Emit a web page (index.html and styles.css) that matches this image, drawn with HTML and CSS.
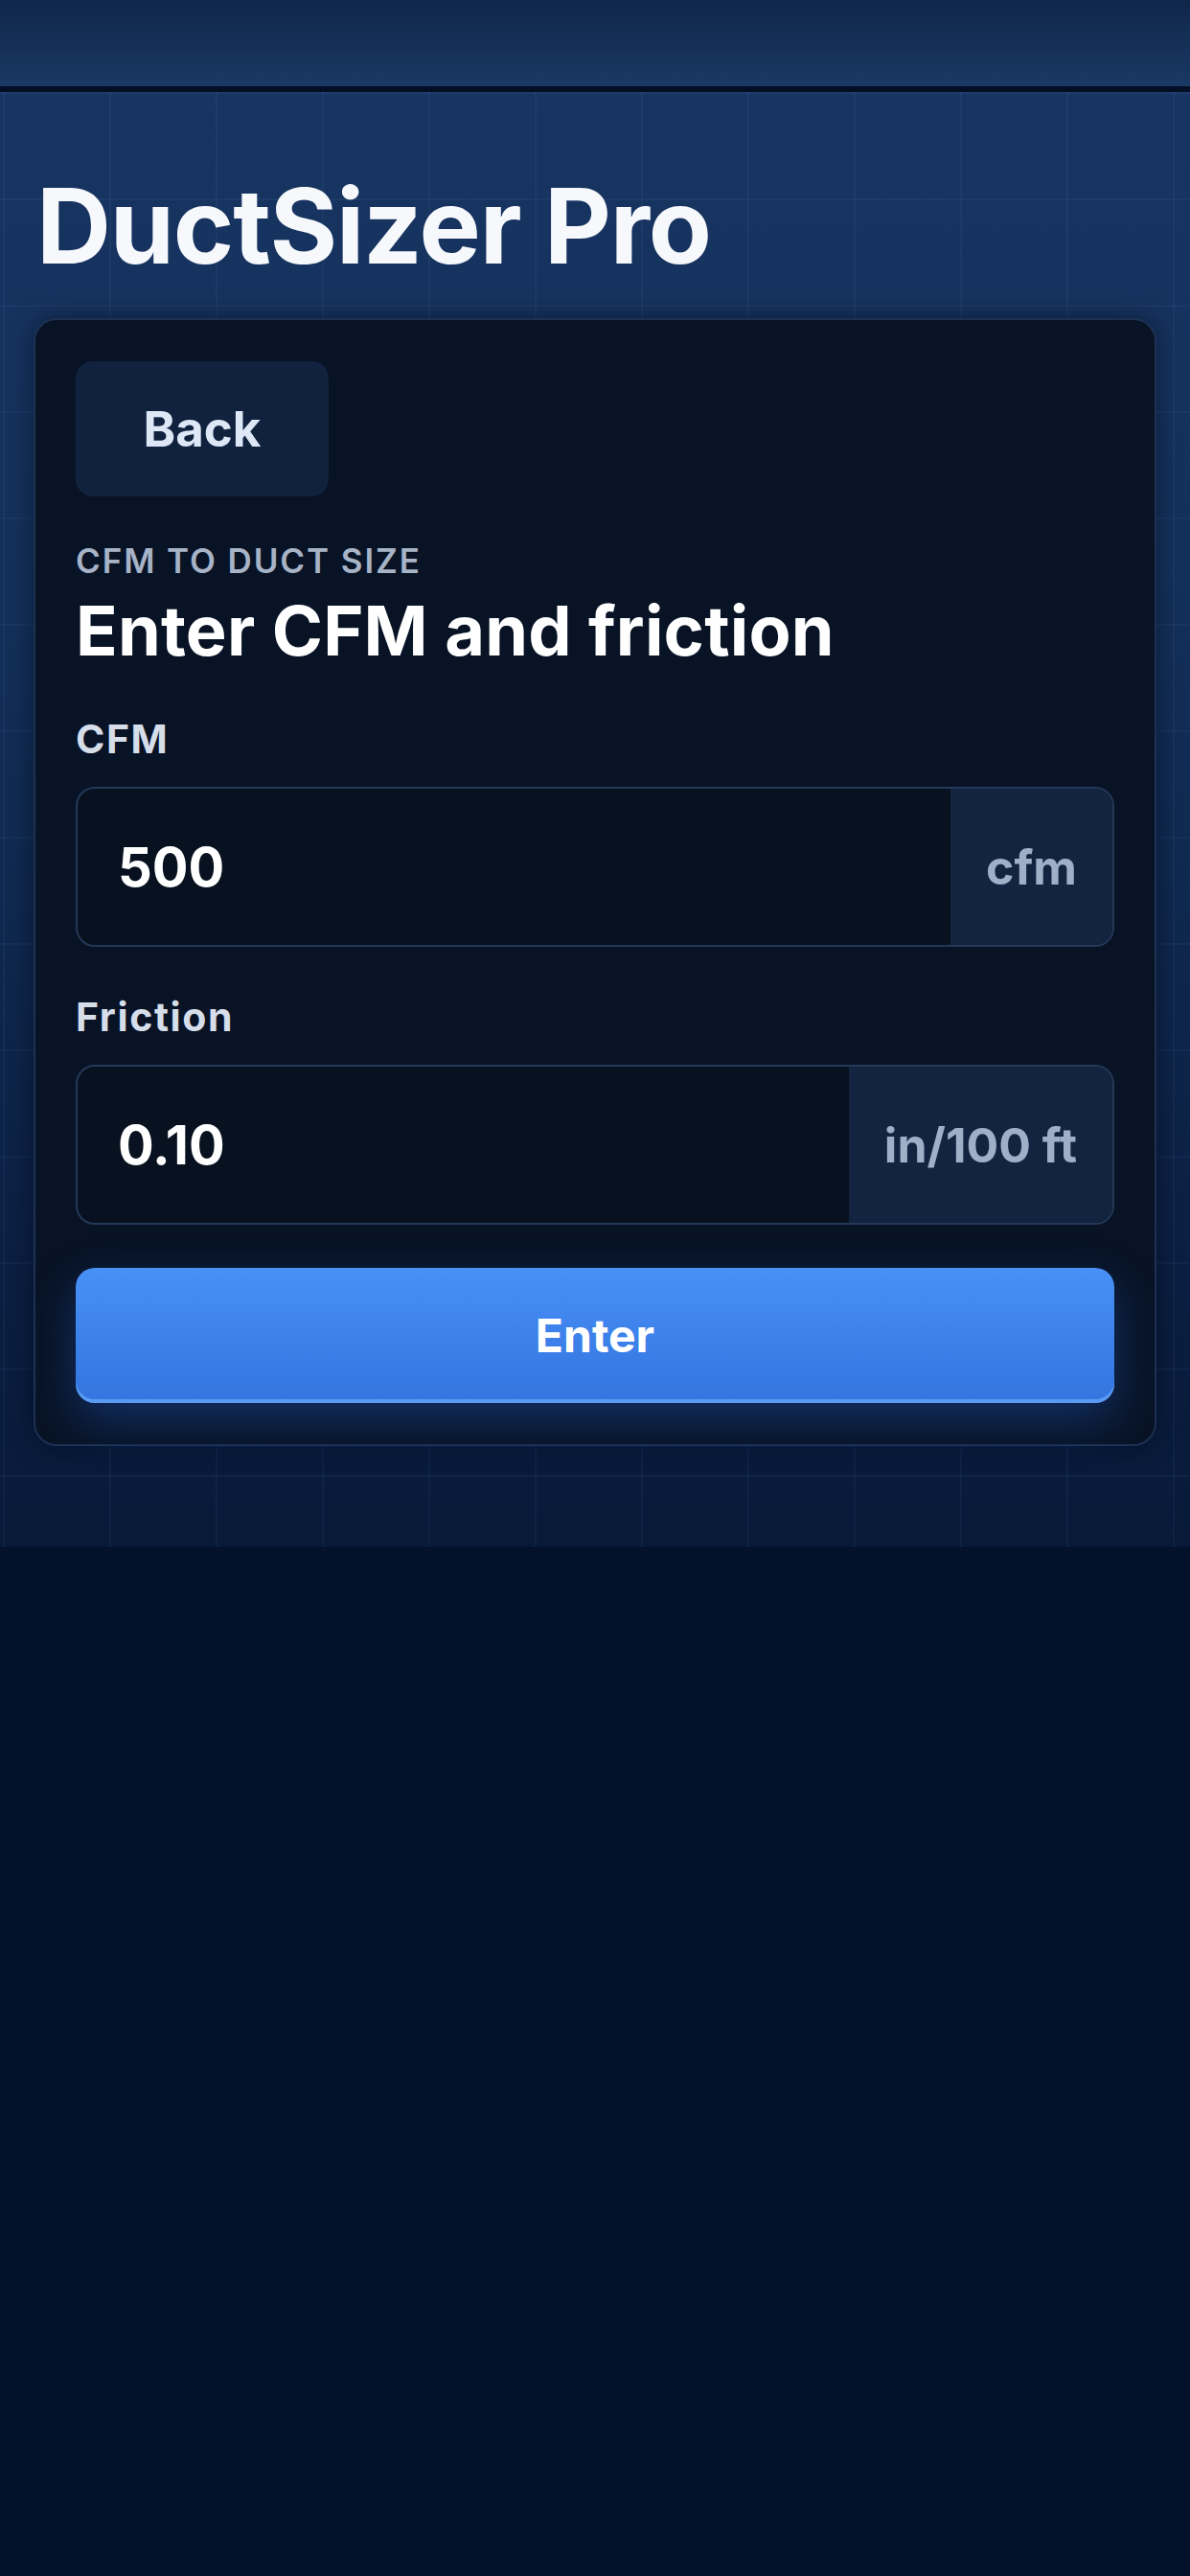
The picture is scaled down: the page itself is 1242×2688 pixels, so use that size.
FILE: index.html
```html
<!DOCTYPE html>
<html lang="en">
<head>
    <meta charset="UTF-8">
    <meta name="viewport" content="width=device-width, initial-scale=1.0">
    <title>DuctSizer Pro</title>
    <link rel="stylesheet" href="styles.css">
</head>
<body>
    <div class="topbar"></div>
    <div class="divider"></div>

    <main class="main">
        <h1 class="app-title">DuctSizer Pro</h1>

        <section class="card">
            <button type="button" class="back-btn">Back</button>

            <p class="eyebrow">CFM TO DUCT SIZE</p>
            <h2 class="heading">Enter CFM and friction</h2>

            <form class="duct-form">
                <label for="cfm" class="field-label">CFM</label>
                <div class="field">
                    <input type="text" id="cfm" class="field-input" value="500">
                    <span class="unit">cfm</span>
                </div>

                <label for="friction" class="field-label friction-label">Friction</label>
                <div class="field">
                    <input type="text" id="friction" class="field-input" value="0.10">
                    <span class="unit">in/100 ft</span>
                </div>

                <button type="button" class="enter-btn">Enter</button>
            </form>
        </section>
    </main>
</body>
</html>
```

FILE: styles.css
```css
body {
    margin: 0;
    padding: 0;
    font-family: Inter, "Noto Sans", "Liberation Sans", sans-serif;
    background-color: #03122a;
    color: #f4f7fc;
}
.topbar {
    height: 90px;
    background: linear-gradient(180deg, #10264a 0%, #1a3964 100%);
}
.divider {
    height: 6px;
    background-color: #040f25;
}
.main {
    padding: 75px 35px 105px;
    background:
        linear-gradient(90deg, rgba(120, 160, 220, 0.06) 2px, transparent 2px) 3px 0 / 111px 111px,
        linear-gradient(180deg, rgba(120, 160, 220, 0.06) 2px, transparent 2px) 0 0 / 111px 111px,
        linear-gradient(180deg, #183562 0%, #13305a 35%, #0b1f42 80%, #081a38 100%);
}
.app-title {
    margin: 0 0 31px 3px;
    font-size: 108px;
    line-height: 130px;
    font-weight: 700;
    letter-spacing: -1.2px;
    color: #f6f8fc;
}
.card {
    background-color: #081325;
    border: 2px solid #1e3153;
    border-radius: 24px;
    padding: 43px 42px 43px;
    box-shadow: 0 0 24px rgba(2, 8, 20, 0.5);
}
.back-btn {
    display: block;
    width: 264px;
    height: 141px;
    border: none;
    border-radius: 18px;
    background-color: #11223f;
    color: #dde7f6;
    font-family: inherit;
    font-size: 51px;
    font-weight: 700;
    padding: 0;
}
.eyebrow {
    margin: 46px 0 0;
    font-size: 35px;
    line-height: 42px;
    font-weight: 600;
    letter-spacing: 1.9px;
    color: #a7b3c7;
}
.heading {
    margin: 9px 0 0;
    font-size: 72px;
    line-height: 86px;
    font-weight: 700;
    letter-spacing: 0.2px;
    color: #ffffff;
}
.duct-form {
    display: flex;
    flex-direction: column;
}
.field-label {
    margin-top: 47px;
    font-size: 41px;
    line-height: 47px;
    font-weight: 700;
    letter-spacing: 1.6px;
    color: #d6deea;
}
.friction-label {
    margin-top: 50px;
}
.field {
    display: flex;
    height: 163px;
    margin-top: 26px;
    border: 2px solid #243858;
    border-radius: 20px;
    background-color: #07111f;
    overflow: hidden;
}
.field-input {
    flex: 1;
    min-width: 0;
    border: none;
    outline: none;
    background: transparent;
    padding: 0 0 0 42px;
    font-family: inherit;
    font-size: 56px;
    font-weight: 700;
    color: #ffffff;
}
.unit {
    display: flex;
    align-items: center;
    padding: 0 37px;
    background-color: #12243f;
    font-size: 50px;
    font-weight: 700;
    color: #9eafc7;
}
.enter-btn {
    margin-top: 45px;
    height: 141px;
    border: none;
    border-radius: 20px;
    background: linear-gradient(180deg, #4891f6 0%, #3b7fe9 60%, #3474df 100%);
    box-shadow: inset 0 -4px 0 #5a9af2, 0 18px 48px rgba(40, 100, 220, 0.35);
    color: #ffffff;
    font-family: inherit;
    font-size: 48px;
    font-weight: 700;
}
```
